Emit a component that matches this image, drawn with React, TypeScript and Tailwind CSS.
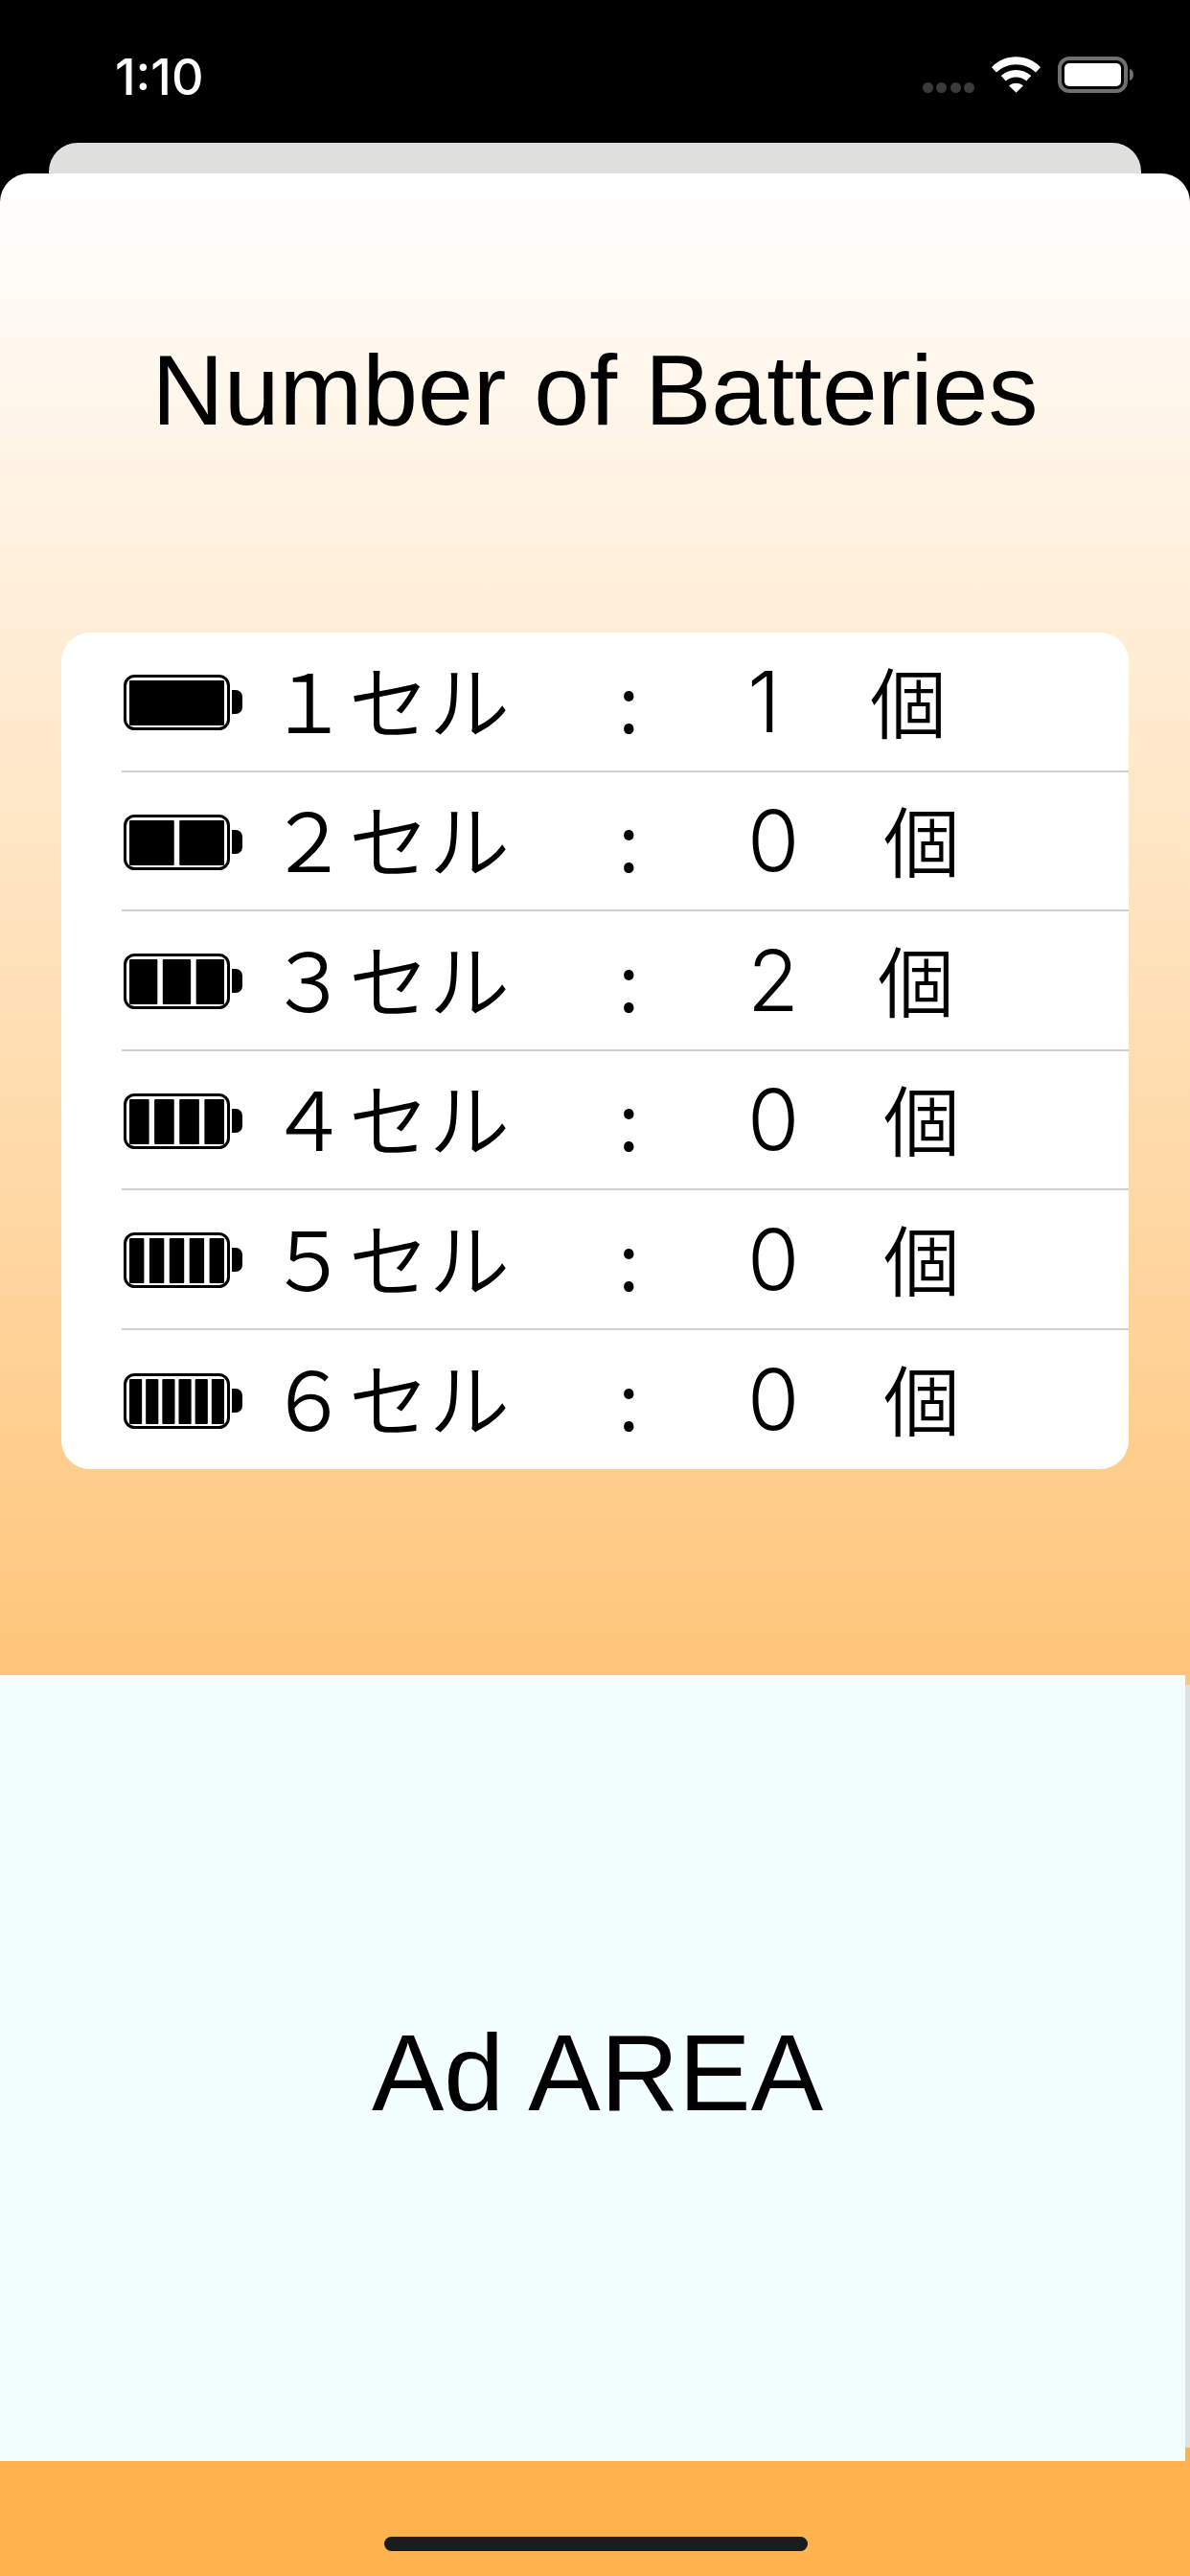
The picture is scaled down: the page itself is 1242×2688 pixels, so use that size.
const rows = [
  { n: '１', count: '1', gap: 'ml-[78px]' },
  { n: '２', count: '0', gap: 'ml-[92px]' },
  { n: '３', count: '2', gap: 'ml-[86px]' },
  { n: '４', count: '0', gap: 'ml-[92px]' },
  { n: '５', count: '0', gap: 'ml-[92px]' },
  { n: '６', count: '0', gap: 'ml-[92px]' },
]

function BatteryIcon({ cells }: { cells: number }) {
  // inner bar spans x 6..105, gaps get narrower as cells go up
  const gap = cells > 5 ? 4 : 5.5
  const w = (99 - gap * (cells - 1)) / cells
  return (
    <svg width="124" height="58" viewBox="0 0 124 58" className="ml-[2px] mt-[3px] block shrink-0">
      <rect x="1.5" y="1.5" width="108" height="55" rx="10" fill="none" stroke="#000" strokeWidth="3" />
      {Array.from({ length: cells }).map((_, i) => (
        <rect key={i} x={6 + i * (w + gap)} y="6" width={w} height="47" rx="1" fill="#000" />
      ))}
      <path d="M113 16h4a7 7 0 0 1 7 7v11a7 7 0 0 1-7 7h-4z" fill="#000" />
    </svg>
  )
}

export default function App() {
  return (
    <div className="relative flex h-[2688px] w-[1242px] flex-col overflow-hidden bg-black">
      {/* Status bar */}
      <div className="flex h-[149px] shrink-0 items-start justify-between pl-[120px] pr-[59px] pt-[59px]">
        <span className="font-['Inter',sans-serif] text-[52px] font-medium leading-[43px] text-white">1:10</span>
        <div className="flex items-end gap-[18px]">
          <div className="flex w-[54px] justify-between">
            <span className="h-[11px] w-[11px] rounded-full bg-[#3a3a3a]" />
            <span className="h-[11px] w-[11px] rounded-full bg-[#3a3a3a]" />
            <span className="h-[11px] w-[11px] rounded-full bg-[#3a3a3a]" />
            <span className="h-[11px] w-[11px] rounded-full bg-[#3a3a3a]" />
          </div>
          <svg width="51" height="38" viewBox="0 0 52 38" className="block">
            <path d="M26 0C16 0 7 4 0 11l5 5.500C11 11 18 8 26 8s15 3 21 8.500l5-5.500C45 4 36 0 26 0z" fill="#fff" />
            <path d="M26 14c-6 0-11.500 2.300-16 6l5 5.500c3-2.500 7-4 11-4s8 1.500 11 4l5-5.500c-4.500-3.700-10-6-16-6z" fill="#fff" />
            <path d="M26 28c-3 0-5.500 1-7.500 2.700L26 38l7.500-7.300C31.500 29 29 28 26 28z" fill="#fff" />
          </svg>
          <svg width="79" height="38" viewBox="0 0 79 38" className="block">
            <rect x="2" y="2" width="69" height="34" rx="10" fill="none" stroke="#6f6f6f" strokeWidth="4" />
            <rect x="7" y="7" width="59" height="24" rx="5" fill="#fff" />
            <path d="M75 13c2.500.5 4 3 4 6s-1.500 5.500-4 6z" fill="#6f6f6f" />
          </svg>
        </div>
      </div>

      {/* Sheet behind */}
      <div className="mx-[51px] h-[32px] shrink-0 rounded-t-[30px] bg-[#dfdfde]" />

      {/* Front sheet */}
      <div className="flex flex-1 flex-col rounded-t-[30px] bg-[linear-gradient(180deg,#ffffff_0%,#ffb34f_83%)]">
        <h1 className="mt-[168px] text-center font-['Liberation_Sans',sans-serif] text-[104px] font-normal leading-[116px] text-black">
          Number of Batteries
        </h1>

        <div className="mx-[64px] mt-[195px] rounded-[30px] bg-white">
          {rows.map((row, i) => (
            <div key={row.n} className={`ml-[63px] flex h-[145.5px] items-center ${i < rows.length - 1 ? 'border-b-2 border-[#cfcfcf]' : ''}`}>
              <BatteryIcon cells={i + 1} />
              <span className="mb-[6px] ml-[27px] w-[365px] font-['Noto_Sans_CJK_JP',sans-serif] text-[84px] font-[350] text-black">
                {row.n}セル
              </span>
              <span className="mb-[6px] w-[135px] font-['Noto_Sans_CJK_JP',sans-serif] text-[84px] font-[350] text-black">:</span>
              <span className="w-[50px] font-['Inter',sans-serif] text-[88px] font-light text-black">{row.count}</span>
              <span className={`${row.gap} mb-[6px] font-['Noto_Sans_CJK_JP',sans-serif] text-[80px] font-[350] text-black`}>個</span>
            </div>
          ))}
        </div>

        {/* Ad slot */}
        <div className="mt-[215px] flex h-[820px] w-[1237px] items-center justify-center bg-[#f3ffff] pl-[10px] pt-[10px]">
          <span className="font-['Liberation_Sans',sans-serif] text-[113px] leading-[130px] text-black">Ad AREA</span>
        </div>
      </div>

      {/* thin strip of the back sheet visible next to the ad */}
      <div className="absolute left-[1237px] top-[1758px] h-[796px] w-[5px] bg-[#e0e0e0]" />

      {/* Home indicator */}
      <div className="absolute bottom-[26px] left-[401px] h-[15px] w-[442px] rounded-full bg-[#1c1c1c]" />
    </div>
  )
}
